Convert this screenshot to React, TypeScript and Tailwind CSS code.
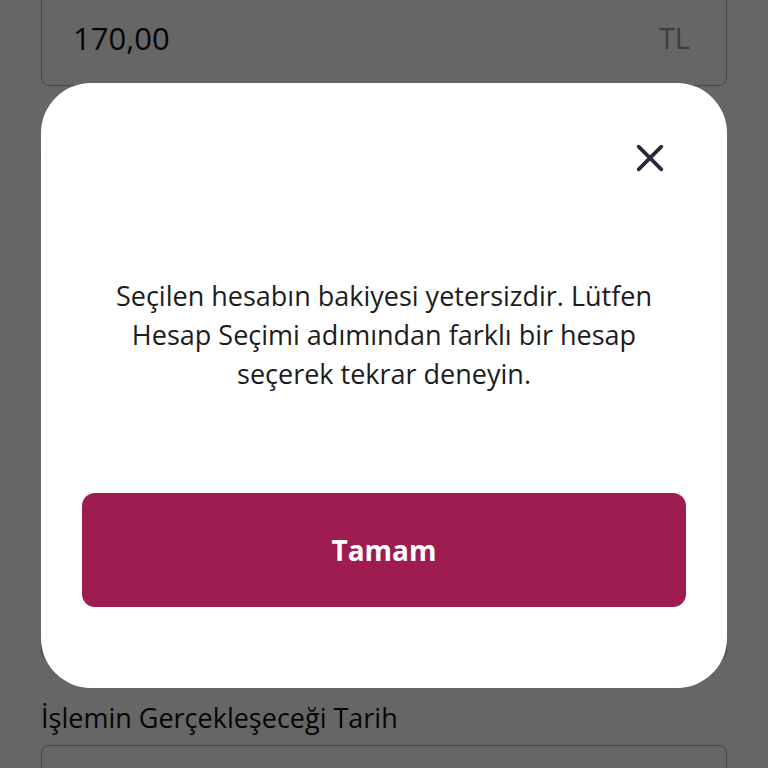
import React from "react";

export default function App() {
  return (
    <div className="relative h-screen overflow-hidden bg-white px-[41px] font-['Open_Sans','Noto_Sans',sans-serif] text-[#111]">
      <div className="-mt-[10px] flex h-[96px] items-center justify-between rounded-lg border border-[#b4b4b4] pl-[31px] pr-[36px]">
        <span className="text-[31px]">170,00</span>
        <span className="text-[29px] text-[#999]">TL</span>
      </div>
      <div className="mt-[42px] text-[27px] leading-[32px]">Açıklama</div>
      <div className="mt-[11px] h-[489px] rounded-lg border border-[#b4b4b4]" />
      <div className="mt-[42px] text-[27px] leading-[32px]">İşlemin Gerçekleşeceği Tarih</div>
      <div className="mt-[11px] h-[96px] rounded-lg border border-[#b4b4b4]" />

      <div className="fixed inset-0 bg-black/60">
        <div className="mx-[41px] mt-[83px] flex flex-col rounded-[50px] bg-white px-[41px] pb-[81px] pt-[59px]">
          <div className="flex justify-end pr-[20px]">
            <button className="flex h-[32px] w-[32px] items-center justify-center text-[#262a3b]">
              <svg viewBox="0 0 24 24" width="32" height="32" fill="none" stroke="currentColor" strokeWidth="2.8" strokeLinecap="round">
                <path d="M3.5 3.5 20.5 20.5M20.5 3.5 3.5 20.5" />
              </svg>
            </button>
          </div>
          <p className="mt-[102px] text-center text-[27px] leading-[39px] text-[#1c1c1c]">
            Seçilen hesabın bakiyesi yetersizdir. Lütfen
            <br />
            Hesap Seçimi adımından farklı bir hesap
            <br />
            seçerek tekrar deneyin.
          </p>
          <button className="mt-[100px] flex h-[114px] items-center justify-center rounded-[13px] bg-[#9e1c50] text-[28px] font-bold text-white">
            Tamam
          </button>
        </div>
      </div>
    </div>
  );
}
